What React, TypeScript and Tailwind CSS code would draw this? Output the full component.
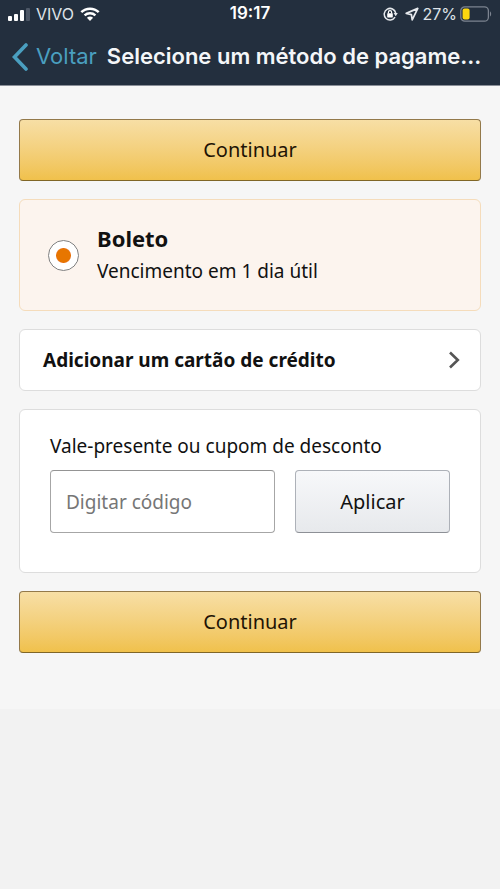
import { useState } from "react";
import type { ReactNode } from "react";

function StatusBar() {
  return (
    <div className="grid grid-cols-3 items-center h-7 px-2 text-base text-[#dfe3e8]">
      {/* Sinal, operadora e wifi */}
      <div className="flex items-center gap-1.5">
        <svg className="w-[22px] h-[13px]" viewBox="0 0 22 13" aria-hidden="true">
          <rect x="0" y="8" width="4" height="5" rx="1" fill="#fff" />
          <rect x="6" y="6" width="4" height="7" rx="1" fill="#fff" />
          <rect x="12" y="2" width="4" height="11" rx="1" fill="#fff" />
          <rect x="18" y="0" width="4" height="13" rx="1" fill="#4d5766" />
        </svg>
        <span>VIVO</span>
        <svg className="w-5 h-[14px]" viewBox="0 0 20 14" aria-hidden="true">
          <path d="M1.3 5.2a12.6 12.6 0 0 1 17.4 0" fill="none" stroke="#fff" strokeWidth="2.5" />
          <path d="M4.6 8.4a7.9 7.9 0 0 1 10.8 0" fill="none" stroke="#fff" strokeWidth="2.4" />
          <path d="M10 14 6.9 10.8a4.6 4.6 0 0 1 6.2 0Z" fill="#fff" />
        </svg>
      </div>

      <time className="text-center text-[17px] font-semibold text-white">19:17</time>

      {/* Trava de rotação, localização e bateria */}
      <div className="flex items-center justify-end gap-[3px]">
        <svg className="w-[15px] h-[14px] mr-1" viewBox="0 0 15 14" aria-hidden="true">
          <path d="M12 10.2A5.8 5.8 0 1 1 12.7 6" fill="none" stroke="#e6e9ed" strokeWidth="1.5" />
          <path d="M10.6 6h4.2l-2.1 3.2Z" fill="#e6e9ed" />
          <rect x="4.2" y="6.2" width="5.6" height="4.2" rx="0.6" fill="#fff" />
          <path d="M5.4 6.5V5.2a1.6 1.6 0 0 1 3.2 0v1.3" fill="none" stroke="#fff" strokeWidth="1.2" />
        </svg>
        <svg className="w-[14px] h-[14px]" viewBox="0 0 14 14" aria-hidden="true">
          <path d="M12.8 1.4 1.2 6.4l5.2 1.2.8 5.2Z" fill="none" stroke="#e6e9ed" strokeWidth="1.7" strokeLinejoin="round" />
        </svg>
        <span>27%</span>
        <svg className="w-8 h-4" viewBox="0 0 32 16" aria-hidden="true">
          <rect x="0.8" y="0.8" width="27.6" height="14.4" rx="4" fill="none" stroke="#7c8490" strokeWidth="1.3" />
          <rect x="2.6" y="2.6" width="7" height="10.8" rx="2" fill="#fcd70e" />
          <path d="M30 5.6c1.5.6 1.5 4.2 0 4.8Z" fill="#7c8490" />
        </svg>
      </div>
    </div>
  );
}

function Continuar() {
  return (
    <button
      type="button"
      className="w-full h-[62px] rounded border border-[#93794a] border-b-[#806626] bg-linear-to-b from-[#f7dfa5] to-[#f0c14b] text-xl text-[#1f1405]"
    >
      Continuar
    </button>
  );
}

function Card({ children }: { children: ReactNode }) {
  return <section className="rounded-md border border-[#dddddd] bg-white">{children}</section>;
}

export default function App() {
  const [metodo, setMetodo] = useState("boleto");
  const [codigo, setCodigo] = useState("");

  return (
    <div className="min-h-screen bg-[#f2f2f2] font-['Noto_Sans',sans-serif] text-[#111111]">
      <header className="bg-[#232f3e] border-b border-[#8a8f98] font-['Inter',sans-serif]">
        <StatusBar />
        <div className="flex items-center h-[57px] pl-3 pr-5">
          <a href="#voltar" className="flex items-center gap-2 text-[#4a9fc0] text-[22px]">
            <svg className="w-4 h-7" viewBox="0 0 16 28" aria-hidden="true">
              <path d="M14 2 2.5 14 14 26" fill="none" stroke="currentColor" strokeWidth="3.6" strokeLinecap="round" />
            </svg>
            Voltar
          </a>
          <h1 className="ml-2.5 text-[22px] font-semibold text-[#f4f6f8] whitespace-nowrap">
            Selecione um método de pagame...
          </h1>
        </div>
      </header>

      <main className="flex flex-col gap-[18px] px-[19px] pt-[33px] pb-14 bg-[#f6f6f6]">
        <Continuar />

        {/* Método selecionado */}
        <label className="flex items-center gap-[18px] h-28 pl-7 rounded-md border border-[#f5dcbb] bg-[#fcf4ee]">
          <input
            type="radio"
            name="metodo"
            value="boleto"
            checked={metodo === "boleto"}
            onChange={(e) => setMetodo(e.target.value)}
            className="appearance-none shrink-0 size-[31px] rounded-full border border-[#808080] bg-white checked:bg-radial checked:from-[#e77600] checked:from-[7px] checked:to-white checked:to-[8px]"
          />
          <span className="flex flex-col">
            <span className="text-[22px] leading-[33px] font-bold">Boleto</span>
            <span className="text-[19px] leading-[33px]">Vencimento em 1 dia útil</span>
          </span>
        </label>

        <Card>
          <a href="#cartao" className="flex items-center justify-between h-[60px] pl-[23px] pr-5">
            <span className="text-[19px] font-bold">Adicionar um cartão de crédito</span>
            <svg className="w-3 h-[18px]" viewBox="0 0 12 18" aria-hidden="true">
              <path d="M2 1.5 9.8 9 2 16.5" fill="none" stroke="#555555" strokeWidth="2.6" />
            </svg>
          </a>
        </Card>

        {/* Vale-presente */}
        <Card>
          <form className="px-[30px] pt-5 pb-[39px]" onSubmit={(e) => e.preventDefault()}>
            <label htmlFor="codigo" className="block text-[19px] leading-[33px] mb-[7px]">
              Vale-presente ou cupom de desconto
            </label>
            <div className="flex gap-5">
              <input
                id="codigo"
                type="text"
                placeholder="Digitar código"
                value={codigo}
                onChange={(e) => setCodigo(e.target.value)}
                className="flex-1 min-w-0 h-[63px] px-[15px] rounded border border-[#a6a6a6] border-t-[#949494] bg-white text-[19px] placeholder:text-[#767676]"
              />
              <button
                type="submit"
                className="w-[155px] h-[63px] rounded border border-[#adb1b8] border-b-[#8d9096] bg-linear-to-b from-[#f7f8fa] to-[#e7e9ec] text-xl"
              >
                Aplicar
              </button>
            </div>
          </form>
        </Card>

        <Continuar />
      </main>
    </div>
  );
}
